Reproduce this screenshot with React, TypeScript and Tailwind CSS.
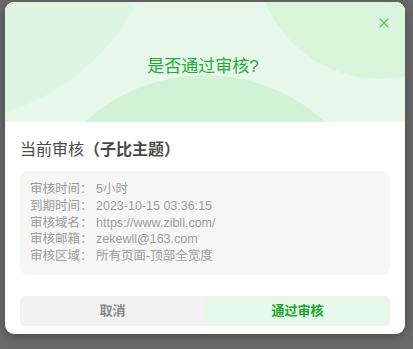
import { X } from 'lucide-react';

const font = { fontFamily: '"Liberation Sans", "Noto Sans CJK SC", sans-serif' };

const rows: [string, string][] = [
  ['审核时间', '5小时'],
  ['到期时间', '2023-10-15 03:36:15'],
  ['审核域名', 'https://www.zibll.com/'],
  ['审核邮箱', 'zekewll@163.com'],
  ['审核区域', '所有页面-顶部全宽度'],
];

export default function App() {
  return (
    <div className="flex h-[349px] w-full overflow-hidden bg-[#6b6b6b] pl-[5px] pt-[2px]" style={font}>
      <div className="h-fit w-[400px] overflow-hidden rounded-[9px] bg-white shadow-[0_2px_12px_rgba(0,0,0,0.35)]">
        <div className="relative h-[120px] overflow-hidden bg-[#e7f8ea]">
          <div className="absolute left-[-292px] top-[-329px] h-[450px] w-[450px] rounded-full bg-[#dff5e3]" />
          <div className="absolute left-[251px] top-[-171px] h-[248px] w-[248px] rounded-full bg-[#d8f5dc]" />
          <div className="absolute left-[23px] top-[73px] h-[354px] w-[354px] rounded-full bg-[#d1f2d7]" />
          <button className="absolute right-[13px] top-[13px] text-[#52c96a]">
            <X size={16} strokeWidth={1.8} />
          </button>
          <div className="relative flex h-full items-center justify-center pr-[4px] pt-[10px] text-[17px] text-[#22ab35]">
            是否通过审核?
          </div>
        </div>

        <div className="flex flex-col gap-[8px] px-[15px] pb-[8px] pt-[15px]">
          <div className="text-[16px] leading-[26px] text-[#4a4a4a]">
            当前审核<b className="font-bold">（子比主题）</b>
          </div>
          <div className="rounded-[8px] bg-[#f6f6f6] p-[10px] text-[12.5px] leading-[16.8px] text-[#9d9d9d]">
            {rows.map(([k, v]) => (
              <div key={k}>
                {k}： {v}
              </div>
            ))}
          </div>
          <div className="mt-[13px] flex h-[30px] overflow-hidden rounded-[5px] text-[13px] font-bold">
            <button className="flex-1 bg-[#f2f2f2] text-[#888]">取消</button>
            <button className="flex-1 bg-[#e6f8ea] text-[#1aa52e]">通过审核</button>
          </div>
        </div>
      </div>
    </div>
  );
}
